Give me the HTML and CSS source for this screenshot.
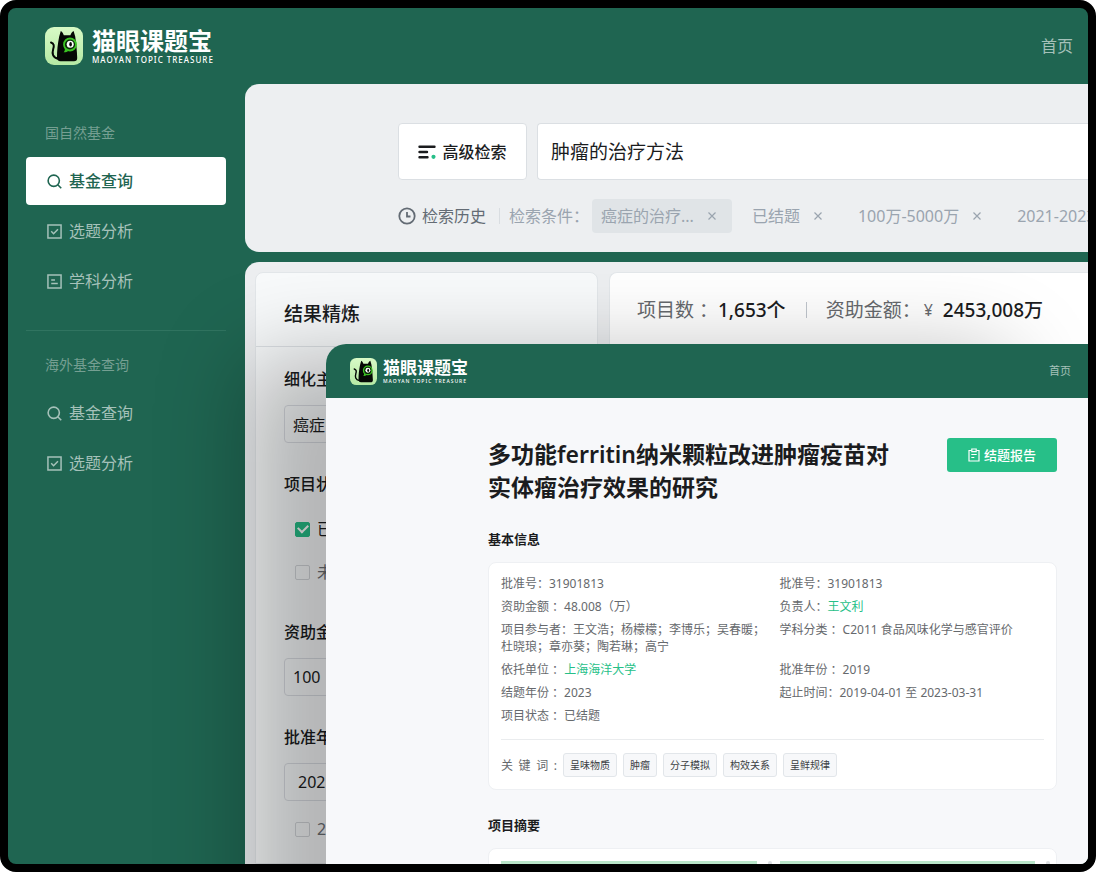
FILE: index.html
```html
<!DOCTYPE html>
<html lang="zh-CN">
<head>
<meta charset="utf-8">
<title>猫眼课题宝</title>
<link rel="stylesheet" href="styles.css">
</head>
<body>
<svg class="defs" aria-hidden="true">
  <defs>
    <linearGradient id="mint" x1="0" y1="0" x2="0" y2="1"><stop offset="0" stop-color="#d8fac6"/><stop offset="1" stop-color="#b5e9a4"/></linearGradient>
    <symbol id="cat" viewBox="0 0 38 38">
      <rect width="38" height="38" rx="9" fill="url(#mint)"/>
      <path d="M6 15.500c3.200 1 3.200 3.500 2.200 6.500-1.300 4.500-.8 8.500 5.300 9.800" fill="none" stroke="#050805" stroke-width="2" stroke-linecap="round"/>
      <path d="M14.200 9.500 15.800 4c1.500.8 2.400 2.400 3 4.200h6.600c.6-1.800 1.600-3.400 3.200-4.200l1.600 5.500c1 7 1.800 14.500 2 21.500 0 2.300-1 3.200-3.200 3.200H15.500c-2.300 0-3.400-1.200-3.500-3.500-.1-7 .8-14.500 2.200-21.200z" fill="#050805"/>
      <path d="M19.800 21.500c.2 1.800-.2 2.800-1.200 3.800 2 .2 3.400-.2 4.600-1.200z" fill="#3bc424"/>
      <circle cx="25" cy="17.500" r="6" fill="#0b2a08" stroke="#3bc424" stroke-width="1.800"/>
      <circle cx="25.200" cy="17.300" r="3.500" fill="#fff"/>
      <ellipse cx="25.600" cy="17.300" rx="1.300" ry="2.300" fill="#050805"/>
    </symbol>
    <symbol id="search" viewBox="0 0 16 16"><g fill="none" stroke="currentColor" stroke-width="1.700"><circle cx="7.200" cy="7.200" r="6"/><path d="m11.500 11.500 3.700 3.700"/></g></symbol>
    <symbol id="check" viewBox="0 0 16 16"><g fill="none" stroke="currentColor" stroke-width="1.600"><path d="M1 1h14v14H1z"/><path d="m4.500 7.800 2.500 2.500 4.700-4.800"/></g></symbol>
    <symbol id="doc" viewBox="0 0 16 16"><g fill="none" stroke="currentColor" stroke-width="1.600"><path d="M1 1h14v14H1zM4.500 6.300h4M4.500 10h7"/></g></symbol>
    <symbol id="cross" viewBox="0 0 10 10"><path d="m1.500 1.500 7 7m0-7-7 7" fill="none" stroke="currentColor" stroke-width="1.200"/></symbol>
  </defs>
</svg>
<div class="frame">
  <header class="topbar">
    <a class="brand" href="#">
      <svg class="brand-icon"><use href="#cat"/></svg>
      <span class="brand-text"><span class="brand-name">猫眼课题宝</span><span class="brand-tag">MAOYAN TOPIC TREASURE</span></span>
    </a>
    <a class="home" href="#">首页</a>
  </header>

  <div class="layout">
    <nav class="sidebar">
      <h2 class="nav-title">国自然基金</h2>
      <a class="nav-item active" href="#"><svg class="nav-icon"><use href="#search"/></svg>基金查询</a>
      <a class="nav-item" href="#"><svg class="nav-icon"><use href="#check"/></svg>选题分析</a>
      <a class="nav-item" href="#"><svg class="nav-icon"><use href="#doc"/></svg>学科分析</a>
      <hr class="nav-line">
      <h2 class="nav-title">海外基金查询</h2>
      <a class="nav-item" href="#"><svg class="nav-icon"><use href="#search"/></svg>基金查询</a>
      <a class="nav-item" href="#"><svg class="nav-icon"><use href="#check"/></svg>选题分析</a>
    </nav>

    <main class="main">
      <section class="search-panel">
        <div class="search-row">
          <button class="advanced" type="button">
            <svg class="advanced-icon" viewBox="0 0 18 14"><path d="M1.500 1.700h15M1.500 7h7.500M1.500 12.300h8" fill="none" stroke="#1b1c1e" stroke-width="2.400" stroke-linecap="round"/><circle cx="15.500" cy="11.800" r="2.100" fill="#27bf88"/></svg>高级检索
          </button>
          <input class="search-input" type="text" value="肿瘤的治疗方法" aria-label="检索">
        </div>
        <div class="history">
          <button class="history-btn" type="button">
            <svg class="history-icon" viewBox="0 0 18 18"><g fill="none" stroke="currentColor" stroke-width="1.800"><circle cx="9" cy="9" r="7.700"/><path d="M9 5v4.500h3.500"/></g></svg>检索历史
          </button>
          <span class="history-label">检索条件：</span>
          <div class="chips">
            <span class="chip chip-on">癌症的治疗...<button class="chip-x" type="button" aria-label="移除癌症的治疗"><svg class="x-icon"><use href="#cross"/></svg></button></span>
            <span class="chip">已结题<button class="chip-x" type="button" aria-label="移除已结题"><svg class="x-icon"><use href="#cross"/></svg></button></span>
            <span class="chip">100万-5000万<button class="chip-x" type="button" aria-label="移除金额"><svg class="x-icon"><use href="#cross"/></svg></button></span>
            <span class="chip">2021-2023</span>
          </div>
        </div>
      </section>

      <section class="results">
        <aside class="refine">
          <h2 class="refine-title">结果精炼</h2>
          <div class="refine-body">
            <div class="field">
              <label class="field-label" for="topic">细化主题</label>
              <input class="field-input" id="topic" type="text" value="癌症">
            </div>
            <fieldset class="field field-status">
              <legend class="field-label">项目状态</legend>
              <label class="tick tick-on"><input class="tick-box" type="checkbox" checked>已结题</label>
              <label class="tick"><input class="tick-box" type="checkbox">未结题</label>
            </fieldset>
            <div class="field">
              <label class="field-label" for="amount">资助金额</label>
              <input class="field-input" id="amount" type="text" value="100">
            </div>
            <div class="field">
              <label class="field-label" for="year">批准年份</label>
              <input class="field-input field-year" id="year" type="text" value="2021">
              <label class="tick"><input class="tick-box" type="checkbox">2023</label>
            </div>
          </div>
        </aside>
        <div class="stats">
          <span class="stat-label">项目数 ：</span><strong class="stat-value">1,653个</strong>
          <span class="stat-line"></span>
          <span class="stat-label">资助金额：</span><span class="stat-yen">¥</span><strong class="stat-value">2453,008万</strong>
        </div>
      </section>
    </main>
  </div>

  <section class="window">
    <header class="window-bar">
      <a class="brand brand-small" href="#">
        <svg class="brand-icon"><use href="#cat"/></svg>
        <span class="brand-text"><span class="brand-name">猫眼课题宝</span><span class="brand-tag">MAOYAN TOPIC TREASURE</span></span>
      </a>
      <a class="home home-small" href="#">首页</a>
    </header>
    <article class="detail">
      <div class="detail-head">
        <h1 class="detail-title">多功能ferritin纳米颗粒改进肿瘤疫苗对<br>实体瘤治疗效果的研究</h1>
        <button class="report" type="button">
          <svg class="report-icon" viewBox="0 0 12 14"><g fill="none" stroke="currentColor" stroke-width="1.200"><path d="M3.500 2.500H1v10.500h10V2.500H8.500"/><path d="M3.800 1h4.400v2.600H3.800zM3.300 6.500h5.400M3.300 9.500h3"/></g></svg>结题报告
        </button>
      </div>
      <h2 class="section-title">基本信息</h2>
      <div class="card">
        <div class="facts">
          <div>批准号：31901813</div><div>批准号：31901813</div>
          <div>资助金额 ：48.008（万）</div><div>负责人：<a class="link" href="#">王文利</a></div>
          <div>项目参与者：王文浩；杨檬檬；李博乐；吴春暖；<br>杜晓琅；章亦葵；陶若琳；高宁</div><div>学科分类 ：C2011 食品风味化学与感官评价</div>
          <div>依托单位 ：<a class="link" href="#">上海海洋大学</a></div><div>批准年份 ：2019</div>
          <div>结题年份 ：2023</div><div>起止时间：2019-04-01 至 2023-03-31</div>
          <div>项目状态 ：已结题</div>
        </div>
        <div class="keywords">
          <span class="keywords-label"><span>关</span><span>键</span><span>词</span><span>:</span></span>
          <span class="tag">呈味物质</span><span class="tag">肿瘤</span><span class="tag">分子模拟</span><span class="tag">构效关系</span><span class="tag">呈鲜规律</span>
        </div>
      </div>
      <h2 class="section-title">项目摘要</h2>
      <div class="card abstract">
        <div class="abstract-col"><span class="mark"></span><span class="handle"></span></div>
        <div class="abstract-col"><span class="mark"></span><span class="handle"></span></div>
      </div>
    </article>
  </section>
</div>
</body>
</html>
```

FILE: styles.css
```css
:root {
  --green: #1f6551;
  --accent: #27bf88;
  --ink: #1b1c1e;
}

* { box-sizing: border-box; }

body {
  margin: 0;
  background: #fff;
  color: var(--ink);
  font-family: "Noto Sans", "Noto Sans CJK SC", sans-serif;
  font-size: 16px;
  line-height: 24px;
}

button, input { font: inherit; color: inherit; margin: 0; }
button { cursor: pointer; }
a { color: inherit; text-decoration: none; }
h1, h2 { margin: 0; }
.defs { position: absolute; width: 0; height: 0; }

.frame {
  position: relative;
  display: flex;
  flex-direction: column;
  height: 100vh;
  overflow: hidden;
  border: 8px solid #000;
  border-radius: 16px;
  background: var(--green);
}

/* Header */
.topbar {
  display: flex;
  flex: none;
  align-items: center;
  justify-content: space-between;
  height: 76px;
  padding: 0 15px 0 37px;
}
.brand { display: flex; align-items: center; gap: 9px; color: #fff; }
.brand-icon { width: 38px; height: 38px; }
.brand-text { display: flex; flex-direction: column; }
.brand-name { font-size: 24px; font-weight: 700; line-height: 28px; }
.brand-tag { font-size: 8px; font-weight: 500; line-height: 10px; letter-spacing: 1px; white-space: nowrap; }
.home { color: #a5c1b9; }

/* Sidebar */
.layout { display: flex; flex: 1; min-height: 0; }
.sidebar { flex: none; width: 237px; padding: 39px 19px 0 18px; }
.nav-title {
  padding-left: 19px;
  margin-bottom: 14px;
  color: #759f92;
  font-size: 14px;
  font-weight: 400;
  line-height: 20px;
}
.nav-item {
  display: flex;
  align-items: center;
  gap: 7px;
  height: 48px;
  margin-bottom: 2px;
  padding-left: 21px;
  border-radius: 4px;
  color: #a5c1b9;
}
.nav-item.active { background: #fff; color: var(--green); font-weight: 500; }
.nav-icon { width: 15px; height: 15px; }
.nav-line { height: 1px; margin: 25px 0 24px; border: 0; background: #307460; }

/* Search */
.main { display: flex; flex: 1; flex-direction: column; gap: 10px; min-width: 0; }
.search-panel {
  flex: none;
  height: 168px;
  padding: 39px 0 0 153px;
  overflow: hidden;
  border-radius: 14px 0 0 14px;
  background: #edeff1;
}
.search-row { display: flex; gap: 10px; height: 57px; }
.advanced {
  display: flex;
  flex: none;
  align-items: center;
  justify-content: center;
  gap: 6px;
  width: 129px;
  padding: 0;
  border: 1px solid #dbdfe3;
  border-radius: 4px;
  background: #fff;
  font-weight: 500;
}
.advanced-icon { width: 18px; height: 14px; }
.search-input {
  flex: 1;
  min-width: 0;
  padding: 0 13px;
  border: 1px solid #dbdfe3;
  border-right: 0;
  border-radius: 4px 0 0 4px;
  background: #fff;
  font-size: 19px;
}
.history { display: flex; align-items: center; margin-top: 19px; color: #9aa4af; white-space: nowrap; }
.history-btn {
  display: flex;
  flex: none;
  align-items: center;
  gap: 6px;
  padding: 0 13px 0 0;
  border: 0;
  background: none;
  color: #636b74;
}
.history-icon { width: 18px; height: 18px; }
.history-label { flex: none; padding-left: 9px; border-left: 1px solid #d9dde1; line-height: 16px; }
.chips { display: flex; gap: 11px; padding-left: 3px; }
.chip { display: flex; flex: none; align-items: center; gap: 13px; height: 34px; padding: 0 15px 0 9px; border-radius: 4px; }
.chip-on { background: #e0e4e7; }
.chip-x { display: flex; padding: 0; border: 0; background: none; }
.x-icon { width: 10px; height: 10px; }

/* Results */
.results {
  display: flex;
  flex: 1;
  gap: 11px;
  min-height: 0;
  padding: 10px 0 0 10px;
  border-radius: 14px 0 0 0;
  background: #edeff1;
}
.refine {
  flex: none;
  width: 343px;
  border: 1px solid #e3e7ea;
  border-radius: 8px 8px 0 0;
  background: #f8fafb;
}
.refine-title {
  height: 74px;
  padding: 0 28px;
  border-bottom: 1px solid #dde1e5;
  font-size: 19px;
  font-weight: 500;
  line-height: 82px;
}
.refine-body { display: flex; flex-direction: column; gap: 29px; padding: 20px 28px 0; }
.field { min-width: 0; margin: 0; padding: 0; border: 0; }
.field-status { padding-bottom: 7px; }
.field-label { display: block; padding: 0; font-weight: 500; line-height: 24px; }
.field-input {
  width: 100%;
  height: 38px;
  margin-top: 14px;
  padding: 0 8px;
  border: 1px solid #dadde3;
  border-radius: 4px;
  background: none;
}
.field-year { padding-left: 13px; }
.tick { display: flex; align-items: center; gap: 7px; margin: 19px 0 0 11px; color: #6d7074; line-height: 24px; }
.field-year + .tick { margin-top: 16px; }
.tick-on { margin-top: 21px; color: var(--ink); }
.tick-box {
  display: grid;
  place-items: center;
  width: 15px;
  height: 15px;
  appearance: none;
  border: 1px solid #d3d6da;
  border-radius: 2px;
}
.tick-box:checked { border-color: var(--accent); background: var(--accent); }
.tick-box:checked::after {
  content: "";
  width: 8px;
  height: 5px;
  margin-bottom: 3px;
  border: solid #fff;
  border-width: 0 0 2px 2px;
  transform: rotate(-45deg);
}
.stats {
  display: flex;
  flex: 1;
  align-items: center;
  height: 76px;
  padding-left: 27px;
  border: 1px solid #e3e7ea;
  border-right: 0;
  border-radius: 8px 0 0 0;
  background: #fff;
  font-size: 19px;
  white-space: nowrap;
}
.stat-label { color: #66696d; }
.stat-value { font-weight: 500; }
.stat-line { width: 1px; height: 16px; margin: 0 19px 0 20px; background: #c0c6cd; }
.stat-yen { margin: 0 10px 0 3px; color: #66696d; font-size: 16px; }

/* Detail window, floating over the results; it runs on past the frame's lower edge */
.window {
  position: absolute;
  top: 336px;
  right: 0;
  bottom: -200px;
  left: 318px;
  overflow: hidden;
  border-radius: 20px 0 0 0;
  background: #f7f8fa;
  box-shadow: -80px 12px 90px rgba(0, 0, 0, 0.28);
}
.window-bar {
  display: flex;
  align-items: center;
  justify-content: space-between;
  height: 54px;
  padding: 0 17px 0 24px;
  background: var(--green);
}
.brand-small { gap: 6px; }
.brand-small .brand-icon { width: 27px; height: 27px; }
.brand-small .brand-name { font-size: 17px; line-height: 20px; }
.brand-small .brand-tag { font-size: 5px; line-height: 7px; }
.home-small { font-size: 11px; }
.detail { padding: 40px 31px 0 162px; }
.detail-head { display: flex; align-items: flex-start; justify-content: space-between; }
.detail-title { font-size: 23px; font-weight: 600; line-height: 33px; white-space: nowrap; }
.report {
  display: flex;
  flex: none;
  align-items: center;
  justify-content: center;
  gap: 4px;
  width: 110px;
  height: 34px;
  padding: 0;
  border: 0;
  border-radius: 3px;
  background: var(--accent);
  color: #fff;
  font-size: 13px;
  font-weight: 500;
}
.report-icon { width: 12px; height: 14px; }
.section-title { margin: 25px 0 13px; font-size: 13px; font-weight: 700; line-height: 20px; }
.card { padding: 12px; border: 1px solid #eef0f3; border-radius: 8px; background: #fff; }
.facts {
  display: grid;
  grid-template-columns: 1fr 1fr;
  gap: 6px 14px;
  padding-bottom: 15px;
  border-bottom: 1px solid #eaecee;
  color: #66696d;
  font-size: 12px;
  line-height: 17px;
  white-space: nowrap;
}
.link { color: var(--accent); }
.keywords { display: flex; align-items: center; gap: 6px; padding-top: 13px; }
.keywords-label { display: flex; justify-content: space-between; width: 56px; color: #66696d; font-size: 12px; line-height: 17px; }
.tag {
  height: 24px;
  padding: 0 6px;
  border: 1px solid #e2e6ea;
  border-radius: 3px;
  background: #f7f8fa;
  color: #3c3f43;
  font-size: 10px;
  line-height: 22px;
}
.abstract { display: grid; grid-template-columns: 1fr 1fr; gap: 14px; }
.abstract-col { display: flex; gap: 11px; }
.mark { flex: 1; height: 16px; background: #b9e5c9; }
.handle { width: 4px; height: 16px; margin-right: -6px; border-radius: 2px; background: #dcdfe2; }
```
